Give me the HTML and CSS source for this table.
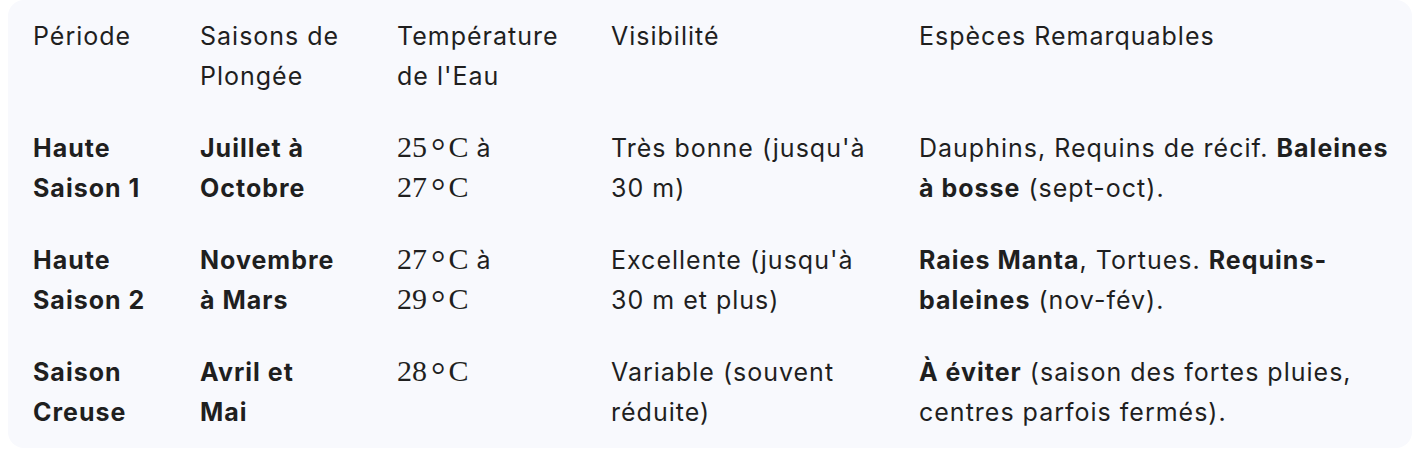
FILE: index.html
```html
<!DOCTYPE html>
<html lang="fr">
<head>
<meta charset="utf-8">
<title>Saisons de plongée</title>
<link rel="stylesheet" href="styles.css">
</head>
<body>
<div class="table-wrap">
  <table class="dive-table">
    <colgroup>
      <col class="c1"><col class="c2"><col class="c3"><col class="c4"><col class="c5">
    </colgroup>
    <thead>
      <tr>
        <th>Période</th>
        <th>Saisons de Plongée</th>
        <th>Température de l'Eau</th>
        <th>Visibilité</th>
        <th>Espèces Remarquables</th>
      </tr>
    </thead>
    <tbody>
      <tr>
        <td><b>Haute Saison 1</b></td>
        <td><b>Juillet à Octobre</b></td>
        <td><span class="math">25<span class="deg">°</span>C</span> à <span class="math">27<span class="deg">°</span>C</span></td>
        <td>Très bonne (jusqu'à 30 m)</td>
        <td>Dauphins, Requins de récif. <b>Baleines à bosse</b> (sept-oct).</td>
      </tr>
      <tr>
        <td><b>Haute Saison 2</b></td>
        <td><b>Novembre à Mars</b></td>
        <td><span class="math">27<span class="deg">°</span>C</span> à <span class="math">29<span class="deg">°</span>C</span></td>
        <td>Excellente (jusqu'à 30 m et plus)</td>
        <td><b>Raies Manta</b>, Tortues. <b>Requins-baleines</b> (nov-fév).</td>
      </tr>
      <tr>
        <td><b>Saison Creuse</b></td>
        <td><b>Avril et Mai</b></td>
        <td><span class="math">28<span class="deg">°</span>C</span></td>
        <td>Variable (souvent réduite)</td>
        <td><b>À éviter</b> (saison des fortes pluies, centres parfois fermés).</td>
      </tr>
    </tbody>
  </table>
</div>
</body>
</html>
```
FILE: styles.css
```css
html, body {
  margin: 0;
  padding: 0;
  background: #ffffff;
}
body {
  padding: 0 8px;
  font-family: Inter, Roboto, "Noto Sans", sans-serif;
  color: #1f1f1f;
}
.table-wrap {
  background: #f8f9fd;
  border-radius: 16px;
  padding: 0 0 0 1px;
  height: 448px;
  box-sizing: border-box;
}
.dive-table {
  width: 100%;
  table-layout: fixed;
  border-collapse: collapse;
  font-size: 25px;
  line-height: 40px;
  letter-spacing: 1px;
}
.c1 { width: 167px; }
.c2 { width: 197px; }
.c3 { width: 214px; }
.c4 { width: 308px; }
.dive-table th,
.dive-table td {
  text-align: left;
  vertical-align: top;
  padding: 16px 28px 16px 24px;
  font-weight: 400;
}
.dive-table th:last-child,
.dive-table td:last-child {
  padding-right: 12px;
}
.dive-table b {
  font-weight: 700;
}
.math {
  font-family: "Liberation Serif", "DejaVu Serif", serif;
  font-size: 30px;
  line-height: 30px;
  letter-spacing: 0;
  white-space: nowrap;
}
.deg {
  font-size: 36px;
  line-height: 0;
  vertical-align: -6px;
  margin: 0 3px 0 4px;
}
```
